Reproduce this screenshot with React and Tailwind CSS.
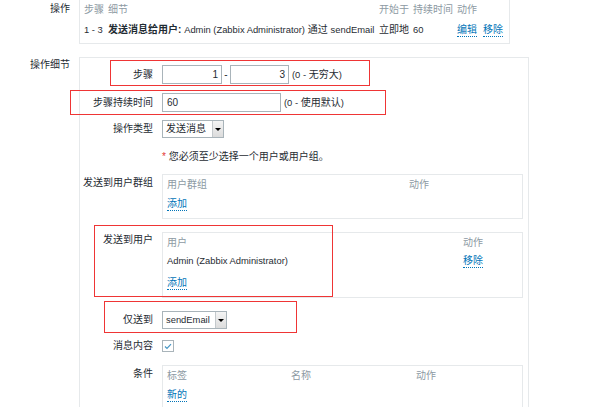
import React from 'react';

const Link = ({ children }) => (
  <span className="text-[#0275b8] border-b border-dotted border-[#0275b8] leading-[13px] inline-block">{children}</span>
);

// latin runs are a bit narrower than the CJK text in the reference
const L = ({ children }) => <span className="text-[9.4px]">{children}</span>;

const Select = ({ value, width }) => (
  <div className={`flex h-[18px] border border-[#a9b4ba] bg-white ${width}`}>
    <div className="flex-1 pl-[3px] leading-[16px] whitespace-nowrap">{value}</div>
    <div className="w-[11px] border-l border-[#c4c9cc] bg-gradient-to-b from-[#f4f4f4] to-[#dcdcdc] flex items-center justify-center">
      <div className="w-0 h-0 border-l-[3px] border-r-[3px] border-t-[3px] border-l-transparent border-r-transparent border-t-black" />
    </div>
  </div>
);

const Row = ({ label, className = '', labelClass = '', children }) => (
  <div className={`flex ${className}`}>
    <div className={`w-[73px] shrink-0 text-right ${labelClass}`}>{label}</div>
    <div className="ml-[9px] flex-1">{children}</div>
  </div>
);

export default function App() {
  return (
    <div className="w-[606px] h-[407px] bg-white relative overflow-hidden text-[10px] leading-[14px] text-[#1f2c33] [font-family:'Liberation_Sans','Noto_Sans_CJK_SC',sans-serif]">
      {/* 操作 */}
      <div className="flex">
        <div className="w-[70px] text-right pt-[2px]">操作</div>
        <div className="ml-[9px] w-[431px] h-[44px] border border-t-0 border-[#e6e9eb] px-[4px] pt-[3px]">
          <div className="flex text-[#8d9aa3] h-[14px]">
            <div className="w-[24px]">步骤</div>
            <div className="w-[271px]">细节</div>
            <div className="w-[34px]">开始于</div>
            <div className="w-[44px]">持续时间</div>
            <div>动作</div>
          </div>
          <div className="flex mt-[6px] h-[14px] whitespace-nowrap">
            <div className="w-[24px]"><L>1 - 3</L></div>
            <div className="w-[271px]"><b>发送消息给用户:</b> <L>Admin (Zabbix Administrator)</L> 通过 <L>sendEmail</L></div>
            <div className="w-[34px]">立即地</div>
            <div className="w-[44px]"><L>60</L></div>
            <div className="flex gap-[6px]"><Link>编辑</Link><Link>移除</Link></div>
          </div>
        </div>
      </div>

      {/* 操作细节 */}
      <div className="flex mt-[13px]">
        <div className="w-[70px] text-right pt-[1px]">操作细节</div>
        <div className="ml-[9px] w-[450px] h-[360px] border border-b-0 border-[#e6e9eb] pt-[7px]">
          <Row label="步骤" className="items-center h-[19px]">
            <div className="flex items-center">
              <div className="w-[60px] h-[19px] border border-[#a9b4ba] text-right pr-[3px] leading-[17px]">1</div>
              <div className="w-[8px] text-center">-</div>
              <div className="w-[59px] h-[19px] border border-[#a9b4ba] text-right pr-[3px] leading-[17px]">3</div>
              <div className="ml-[3px]"><L>(0 - </L>无穷大<L>)</L></div>
            </div>
          </Row>
          <Row label="步骤持续时间" className="items-center h-[19px] mt-[9px]">
            <div className="flex items-center">
              <div className="w-[119px] h-[19px] border border-[#a9b4ba] pl-[4px] leading-[17px]">60</div>
              <div className="ml-[3px]"><L>(0 - </L>使用默认<L>)</L></div>
            </div>
          </Row>
          <Row label="操作类型" className="items-center h-[18px] mt-[8px]">
            <Select value="发送消息" width="w-[62px]" />
          </Row>
          <Row label="" className="mt-[12px]">
            <div><span className="text-[#e33734]">*</span> 您必须至少选择一个用户或用户组。</div>
          </Row>
          <Row label="发送到用户群组" className="mt-[10px]" labelClass="pt-[2px]">
            <div className="w-[361px] h-[45px] border border-[#e6e9eb] px-[4px] pt-[3px]">
              <div className="flex text-[#8d9aa3]">
                <div className="w-[242px]">用户群组</div>
                <div>动作</div>
              </div>
              <div className="mt-[5px]"><Link>添加</Link></div>
            </div>
          </Row>
          <Row label="发送到用户" className="mt-[13px]" labelClass="pt-[1px]">
            <div className="w-[361px] h-[66px] border border-[#e6e9eb] px-[4px] pt-[3px]">
              <div className="flex text-[#8d9aa3]">
                <div className="w-[296px]">用户</div>
                <div>动作</div>
              </div>
              <div className="flex mt-[4px]">
                <div className="w-[296px]"><L>Admin (Zabbix Administrator)</L></div>
                <Link>移除</Link>
              </div>
              <div className="mt-[8px]"><Link>添加</Link></div>
            </div>
          </Row>
          <Row label="仅送到" className="items-center h-[18px] mt-[13px]">
            <Select value={<L>sendEmail</L>} width="w-[65px]" />
          </Row>
          <Row label="消息内容" className="items-center h-[14px] mt-[10px]">
            <div className="w-[12px] h-[12px] border border-[#a9b4ba] flex items-center justify-center">
              <svg width="8" height="7" viewBox="0 0 8 7">
                <path d="M1 3.5 L3 5.5 L7 1.2" fill="none" stroke="#4796c4" strokeWidth="1.2" />
              </svg>
            </div>
          </Row>
          <Row label="条件" className="mt-[12px]" labelClass="pt-[2px]">
            <div className="w-[361px] h-[60px] border border-b-0 border-[#e6e9eb] px-[4px] pt-[3px]">
              <div className="flex text-[#8d9aa3]">
                <div className="w-[124px]">标签</div>
                <div className="w-[125px]">名称</div>
                <div>动作</div>
              </div>
              <div className="mt-[5px]"><Link>新的</Link></div>
            </div>
          </Row>
        </div>
      </div>

      {/* red annotation boxes */}
      <div className="absolute left-[110px] top-[60px] w-[260px] h-[26px] border border-[#ef3535]" />
      <div className="absolute left-[70px] top-[90px] w-[316px] h-[25px] border border-[#ef3535]" />
      <div className="absolute left-[94px] top-[225px] w-[239px] h-[72px] border border-[#ef3535]" />
      <div className="absolute left-[104px] top-[301px] w-[193px] h-[32px] border border-[#ef3535]" />
    </div>
  );
}
